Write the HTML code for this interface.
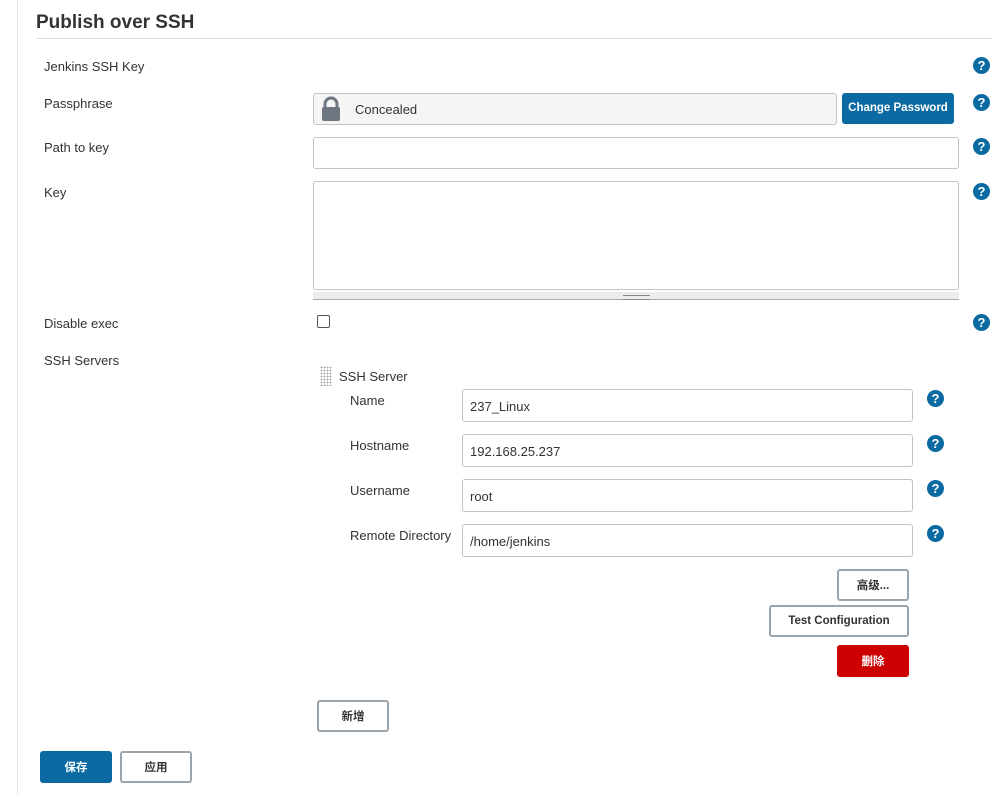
<!DOCTYPE html>
<html><head><meta charset="utf-8"><style>
body{margin:0;width:999px;height:794px;background:#fff;position:relative;overflow:hidden;font-family:"Liberation Sans","Noto Sans CJK SC",sans-serif;color:#333;font-size:13px}
.a{position:absolute}
.lbl{position:absolute;font-size:13px;color:#333}
.in{position:absolute;border:1px solid #c3c3c3;border-radius:3px;background:#fff;box-sizing:border-box;font-size:13px;padding-left:7px;display:flex;align-items:center;color:#333}
.h{position:absolute;width:17px;height:17px;border-radius:50%;background:#0b6aa2;color:#fff;font-weight:bold;font-size:13px;text-align:center;line-height:17px}
.btn{position:absolute;box-sizing:border-box;border:2px solid #9aa5ae;border-radius:3px;background:#fff;font-weight:bold;font-size:11.5px;display:flex;align-items:center;justify-content:center;color:#333}
</style></head><body>
<div class="a" style="left:17px;top:0;width:1px;height:794px;background:#e6e6e6"></div>
<div class="a" style="left:36px;top:12px;font-size:19px;font-weight:bold;color:#333">Publish over SSH</div>
<div class="a" style="left:36px;top:38px;width:956px;height:1px;background:#ddd"></div>

<div class="lbl" style="left:44px;top:59px">Jenkins SSH Key</div>
<div class="lbl" style="left:44px;top:96px">Passphrase</div>
<div class="lbl" style="left:44px;top:140px">Path to key</div>
<div class="lbl" style="left:44px;top:185px">Key</div>
<div class="lbl" style="left:44px;top:316px">Disable exec</div>
<div class="lbl" style="left:44px;top:353px">SSH Servers</div>

<div class="h" style="left:973px;top:57px">?</div>
<div class="h" style="left:973px;top:94px">?</div>
<div class="h" style="left:973px;top:138px">?</div>
<div class="h" style="left:973px;top:183px">?</div>
<div class="h" style="left:973px;top:314px">?</div>

<div class="in" style="left:313px;top:93px;width:524px;height:32px;background:#f5f5f5;padding-left:41px">Concealed</div>
<svg class="a" style="left:320px;top:96px" width="22" height="26" viewBox="0 0 22 26"><path d="M5 12V8a6 6 0 0 1 12 0v4" fill="none" stroke="#6d7681" stroke-width="3"/><rect x="2" y="11" width="18" height="14" rx="2" fill="#6d7681"/></svg>
<div class="a" style="left:842px;top:93px;width:112px;height:31px;background:#0b6aa2;border-radius:3px;color:#fff;font-weight:bold;font-size:11.5px;text-align:center;line-height:31px">Change Password</div>

<div class="in" style="left:313px;top:137px;width:646px;height:32px"></div>
<div class="in" style="left:313px;top:181px;width:646px;height:109px"></div>
<div class="a" style="left:313px;top:292px;width:646px;height:7px;background:#e9edf0;border-bottom:1px solid #aaa"></div>
<div class="a" style="left:623px;top:295px;width:27px;height:3px;border-top:1px solid #888;border-bottom:1px solid #888"></div>

<div class="a" style="left:317px;top:315px;width:11px;height:11px;border:1px solid #555;border-radius:2px"></div>

<div class="a" style="left:320px;top:366px;width:12px;height:20px;background-image:radial-gradient(#aaa 0.8px,transparent 1px);background-size:3px 3px"></div>
<div class="lbl" style="left:339px;top:369px">SSH Server</div>

<div class="lbl" style="left:350px;top:393px">Name</div>
<div class="lbl" style="left:350px;top:438px">Hostname</div>
<div class="lbl" style="left:350px;top:483px">Username</div>
<div class="lbl" style="left:350px;top:528px">Remote Directory</div>
<div class="in" style="left:462px;top:389px;width:451px;height:33px;padding-top:2px">237_Linux</div>
<div class="in" style="left:462px;top:434px;width:451px;height:33px;padding-top:2px">192.168.25.237</div>
<div class="in" style="left:462px;top:479px;width:451px;height:33px;padding-top:2px">root</div>
<div class="in" style="left:462px;top:524px;width:451px;height:33px;padding-top:2px">/home/jenkins</div>
<div class="h" style="left:927px;top:390px">?</div>
<div class="h" style="left:927px;top:435px">?</div>
<div class="h" style="left:927px;top:480px">?</div>
<div class="h" style="left:927px;top:525px">?</div>

<div class="btn" style="left:837px;top:569px;width:72px;height:32px">高级...</div>
<div class="btn" style="left:769px;top:605px;width:140px;height:32px">Test Configuration</div>
<div class="btn" style="left:837px;top:645px;width:72px;height:32px;background:#cc0000;border-color:#cc0000;color:#fff">删除</div>
<div class="btn" style="left:317px;top:700px;width:72px;height:32px">新增</div>
<div class="btn" style="left:40px;top:751px;width:72px;height:32px;background:#0b6aa2;border-color:#0b6aa2;color:#fff">保存</div>
<div class="btn" style="left:120px;top:751px;width:72px;height:32px">应用</div>
</body></html>
